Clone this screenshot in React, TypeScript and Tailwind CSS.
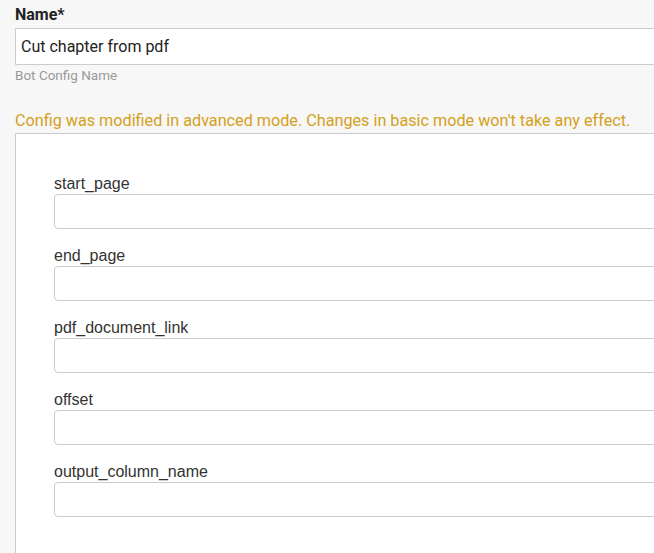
export default function App() {
  const fields = ["start_page", "end_page", "pdf_document_link", "offset", "output_column_name"];

  return (
    <div className="w-[654px] h-[553px] overflow-hidden bg-[#f7f7f7]">
      <div className="w-[720px] pl-[15px] pt-[5px]">
        {/* Name field */}
        <label className="block text-[16px] leading-[20px] font-bold text-[#222] font-['Roboto',sans-serif]">
          Name*
        </label>
        <div className="mt-[3px] h-[37px] border border-[#cccccc] bg-white flex items-center px-[5px] text-[16px] text-[#222] font-['Roboto',sans-serif]">
          Cut chapter from pdf
        </div>
        <div className="mt-[1px] text-[13.5px] leading-[18px] text-[#999999] font-['Roboto',sans-serif]">
          Bot Config Name
        </div>

        {/* Warning */}
        <p className="mt-[27px] text-[16.2px] leading-[20px] text-[#d4a020] font-['Roboto',sans-serif]">
          Config was modified in advanced mode. Changes in basic mode won't take any effect.
        </p>

        {/* Basic mode panel */}
        <div className="mt-[2px] h-[450px] border border-[#cccccc] bg-white pl-[38px] pt-[41px] font-['Liberation_Sans',Arial,sans-serif]">
          <div className="flex flex-col gap-[18px]">
            {fields.map((f) => (
              <div key={f}>
                <div className="text-[16px] leading-[18px] text-[#333333]">{f}</div>
                <div className="mt-[1px] h-[35px] border border-[#cccccc] rounded-[4px] bg-white" />
              </div>
            ))}
          </div>
        </div>
      </div>
    </div>
  );
}
